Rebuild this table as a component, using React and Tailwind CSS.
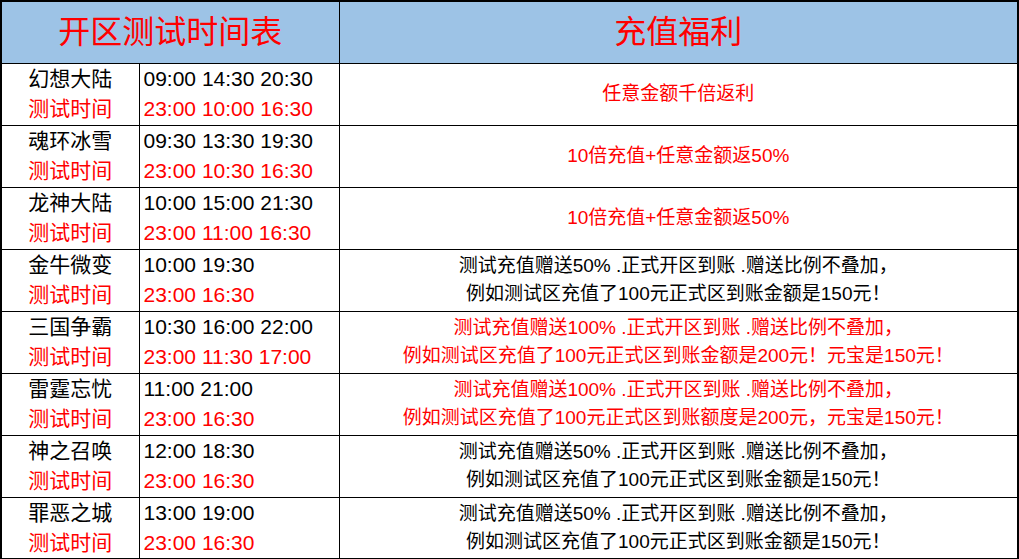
import React from "react";

const rows = [
  {
    name: "幻想大陆",
    times: "09:00 14:30 20:30",
    test: "23:00 10:00 16:30",
    perk: ["任意金额千倍返利"],
    red: true,
  },
  {
    name: "魂环冰雪",
    times: "09:30 13:30 19:30",
    test: "23:00 10:30 16:30",
    perk: ["10倍充值+任意金额返50%"],
    red: true,
  },
  {
    name: "龙神大陆",
    times: "10:00 15:00 21:30",
    test: "23:00 11:00 16:30",
    perk: ["10倍充值+任意金额返50%"],
    red: true,
  },
  {
    name: "金牛微变",
    times: "10:00 19:30",
    test: "23:00 16:30",
    perk: ["测试充值赠送50% .正式开区到账 .赠送比例不叠加，", "例如测试区充值了100元正式区到账金额是150元！"],
    red: false,
  },
  {
    name: "三国争霸",
    times: "10:30 16:00 22:00",
    test: "23:00 11:30 17:00",
    perk: ["测试充值赠送100% .正式开区到账 .赠送比例不叠加，", "例如测试区充值了100元正式区到账金额是200元！元宝是150元！"],
    red: true,
  },
  {
    name: "雷霆忘忧",
    times: "11:00 21:00",
    test: "23:00 16:30",
    perk: ["测试充值赠送100% .正式开区到账 .赠送比例不叠加，", "例如测试区充值了100元正式区到账额度是200元，元宝是150元！"],
    red: true,
  },
  {
    name: "神之召唤",
    times: "12:00 18:30",
    test: "23:00 16:30",
    perk: ["测试充值赠送50% .正式开区到账 .赠送比例不叠加，", "例如测试区充值了100元正式区到账金额是150元！"],
    red: false,
  },
  {
    name: "罪恶之城",
    times: "13:00 19:00",
    test: "23:00 16:30",
    perk: ["测试充值赠送50% .正式开区到账 .赠送比例不叠加，", "例如测试区充值了100元正式区到账金额是150元！"],
    red: false,
  },
];

const font = { fontFamily: '"Liberation Sans", "Noto Sans CJK SC", sans-serif' };

export default function App() {
  return (
    <div className="w-[1019px] h-[559px] bg-white overflow-hidden" style={font}>
      <table className="w-[1019px] table-fixed border-collapse border-2 border-black">
        <colgroup>
          <col className="w-[138px]" />
          <col className="w-[200px]" />
          <col />
        </colgroup>
        <thead>
          <tr className="h-[62px] bg-[#9dc3e6]">
            <th colSpan={2} className="p-0 border border-black text-[32px] font-normal text-[#ff0000] text-center">
              开区测试时间表
            </th>
            <th className="p-0 border border-black text-[32px] font-normal text-[#ff0000] text-center">
              充值福利
            </th>
          </tr>
        </thead>
        <tbody>
          {rows.map((r) => (
            <tr key={r.name} className="h-[62px]">
              <td className="p-0 border border-black text-center text-[21px] leading-[30px] whitespace-nowrap">
                <div className="text-black">{r.name}</div>
                <div className="text-[#ff0000]">测试时间</div>
              </td>
              <td className="p-0 pl-[4px] border border-black text-[21px] leading-[30px] whitespace-nowrap">
                <div className="text-black">{r.times}</div>
                <div className="text-[#ff0000]">{r.test}</div>
              </td>
              <td
                className={`p-0 border border-black text-center text-[19px] leading-[28px] whitespace-nowrap ${
                  r.red ? "text-[#ff0000]" : "text-black"
                }`}
              >
                {r.perk.map((p) => (
                  <div key={p}>{p}</div>
                ))}
              </td>
            </tr>
          ))}
        </tbody>
      </table>
    </div>
  );
}
